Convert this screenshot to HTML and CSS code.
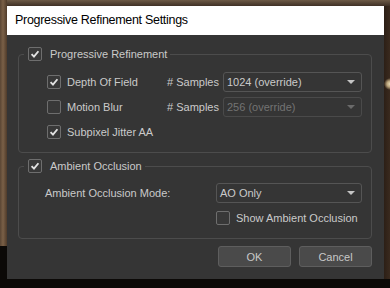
FILE: index.html
```html
<!DOCTYPE html>
<html lang="en">
<head>
<meta charset="UTF-8" />
<title>Progressive Refinement Settings</title>
<link rel="stylesheet" href="styles.css">
</head>
<body>
<div class="dialog">
  <div class="titlebar">Progressive Refinement Settings</div>
  <div class="dialog-body">
    <fieldset class="group">
      <legend>
        <span class="check on"><svg viewBox="0 0 14 14"><path d="M3 7.2 L5.8 10 L11 3.8" /></svg></span>
        <span>Progressive Refinement</span>
      </legend>
      <div class="grid pr-grid">
        <label class="opt"><span class="check on"><svg viewBox="0 0 14 14"><path d="M3 7.2 L5.8 10 L11 3.8" /></svg></span>Depth Of Field</label>
        <span class="lbl">#&nbsp;Samples</span>
        <div class="combo">1024 (override)<span class="arrow"></span></div>

        <label class="opt"><span class="check"></span>Motion Blur</label>
        <span class="lbl">#&nbsp;Samples</span>
        <div class="combo disabled">256 (override)<span class="arrow"></span></div>

        <label class="opt"><span class="check on"><svg viewBox="0 0 14 14"><path d="M3 7.2 L5.8 10 L11 3.8" /></svg></span>Subpixel Jitter AA</label>
      </div>
    </fieldset>

    <fieldset class="group ao">
      <legend>
        <span class="check on"><svg viewBox="0 0 14 14"><path d="M3 7.2 L5.8 10 L11 3.8" /></svg></span>
        <span>Ambient Occlusion</span>
      </legend>
      <div class="grid ao-grid">
        <span class="lbl">Ambient Occlusion Mode:</span>
        <div class="combo">AO Only<span class="arrow"></span></div>
        <label class="opt show-ao"><span class="check"></span>Show Ambient Occlusion</label>
      </div>
    </fieldset>

    <div class="buttons">
      <button class="btn">OK</button>
      <button class="btn">Cancel</button>
    </div>
  </div>
</div>
</body>
</html>
```

FILE: styles.css
```css
html, body {
  margin: 0;
  height: 100%;
}
body {
  font-family: 'Liberation Sans', Arial, sans-serif;
  font-size: 11px;
  overflow: hidden;
  background-color: #0b0907;
  background-image:
    linear-gradient(90deg, #5a4634 0, #7a6047 3px, #4f3b2a 7px, transparent 7px),
    linear-gradient(180deg, #6d5a46 0, #3f3025 6px, transparent 6px),
    radial-gradient(circle at 390px 84px, #e8dcb8 0, #b8a27a 3px, transparent 6px),
    linear-gradient(90deg, transparent 384px, #2c1f16 384px, #3a2a1e 390px);
  background-size: 7px 246px, 100% 6px, 100% 100%, 100% 279px;
  background-repeat: no-repeat;
}
.dialog {
  width: 377px;
  margin: 6px 0 0 7px;
  background: #353535;
  color: #cacaca;
}
.titlebar {
  background: #fff;
  color: #000;
  height: 29px;
  line-height: 29px;
  padding-left: 8px;
  font-size: 12.5px;
  letter-spacing: -0.3px;
}
.dialog-body {
  padding: 12px 12px 12px 11px;
}
.group {
  margin: 0;
  border: 1px solid #4c4c4c;
  border-radius: 4px;
  padding: 0 9px 10px 5px;
  min-width: 0;
}
.group legend {
  display: flex;
  align-items: center;
  gap: 8px;
  height: 14px;
  line-height: 14px;
  padding: 0 3px 0 4px;
}
.group.ao {
  margin-top: 6px;
  padding-bottom: 13px;
}
.grid {
  display: grid;
  align-items: center;
}
.pr-grid {
  margin: 11px 0 0 23px;
  grid-template-columns: 120px 56px 139px;
  grid-auto-rows: 20px;
  row-gap: 5px;
}
.ao-grid {
  margin: 10px 0 0 21px;
  grid-template-columns: 171px 146px;
  grid-template-rows: 20px 14px;
  row-gap: 8px;
}
.show-ao {
  grid-column: 2;
  gap: 7px;
}
.opt {
  display: flex;
  align-items: center;
  gap: 6px;
  white-space: nowrap;
}
.lbl {
  white-space: nowrap;
}
.check {
  box-sizing: border-box;
  width: 14px;
  height: 14px;
  border: 1px solid #6e6e6e;
  border-radius: 2px;
  background: #383838;
  flex: none;
  display: flex;
}
.check svg {
  width: 12px;
  height: 12px;
  fill: none;
  stroke: #e2e2e2;
  stroke-width: 2.2;
}
.combo {
  box-sizing: border-box;
  height: 20px;
  border: 1px solid #555;
  border-radius: 3px;
  padding: 0 0 0 3px;
  line-height: 18px;
  display: flex;
  justify-content: space-between;
  align-items: center;
}
.combo .arrow {
  width: 0;
  height: 0;
  border-left: 4px solid transparent;
  border-right: 4px solid transparent;
  border-top: 4px solid #c4c4c4;
  margin-right: 6px;
}
.combo.disabled {
  color: #737373;
  border-color: #4a4a4a;
}
.combo.disabled .arrow {
  border-top-color: #6a6a6a;
}
.buttons {
  display: flex;
  justify-content: flex-end;
  gap: 8px;
  margin-top: 7px;
}
.btn {
  width: 73px;
  height: 21px;
  background: #4a4a4a;
  border: 1px solid #5e5e5e;
  border-radius: 3px;
  color: #c8c8c8;
  font-family: inherit;
  font-size: 11px;
  padding: 0;
}
```
